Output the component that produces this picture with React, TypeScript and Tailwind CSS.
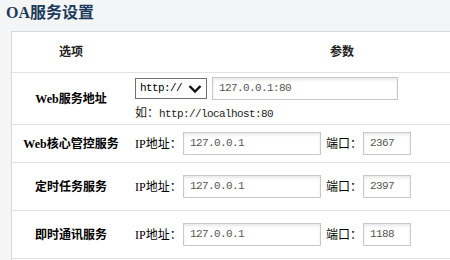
const mono = { fontFamily: '"Liberation Mono", "Noto Sans CJK SC", monospace' };
const serif = { fontFamily: '"Liberation Serif", "Noto Sans CJK SC", serif' };

function Field({ value, width }: { value: string; width: string }) {
  return (
    <div
      className={`${width} h-[23px] border border-[#c8c8c8] bg-white shadow-[inset_0_2px_3px_rgba(0,0,0,0.09)] pl-[6px] flex items-center text-[11px] tracking-[-0.6px] text-[#555]`}
      style={mono}
    >
      {value}
    </div>
  );
}

function ServiceRow({ label, ip, port, height }: { label: string; ip: string; port: string; height: string }) {
  return (
    <div className={`flex ${height} border-t border-[#e2e2e2]`}>
      <div className="w-[118px] flex items-center justify-center text-[12px] font-bold text-black" style={serif}>{label}</div>
      <div className="flex-1 flex items-center pl-[5px] text-[12px] text-black" style={serif}>
        <span className="w-[48px]">IP地址：</span>
        <Field value={ip} width="w-[138px]" />
        <span className="w-[37px] ml-[5px]">端口：</span>
        <Field value={port} width="w-[48px]" />
      </div>
    </div>
  );
}

export default function App() {
  return (
    <div
      className="w-[450px] h-[260px] overflow-hidden bg-[#f4f5f7]"
      style={{ fontFamily: '"Liberation Sans", "Noto Sans CJK SC", sans-serif' }}
    >
      <div className="h-[31px] pl-[6px] pt-[1px] text-[16px] font-bold text-[#1c3a5a] leading-[24px]" style={serif}>OA服务设置</div>

      <div className="ml-[11px] w-[544px] border border-[#d9d9d9] bg-white">
        {/* header */}
        <div className="flex h-[40px] text-[12px] font-bold text-[#222]">
          <div className="w-[118px] flex items-center justify-center">选项</div>
          <div className="flex-1 flex items-center justify-center">参数</div>
        </div>

        {/* web address */}
        <div className="flex h-[52px] border-t border-[#e2e2e2]">
          <div className="w-[118px] flex items-center justify-center text-[12px] font-bold text-black" style={serif}>Web服务地址</div>
          <div className="flex-1 pl-[5px] pt-[4px]">
            <div className="flex items-center gap-[5px]">
              <div className="w-[72px] h-[21px] border border-[#707070] flex items-center justify-between pl-[4px] pr-[4px] text-[11px] tracking-[-0.6px] text-black" style={mono}>
                <span>http://</span>
                <svg width="14" height="10" viewBox="0 0 14 10">
                  <path d="M1.5 2 L7 7.5 L12.5 2" fill="none" stroke="#111" strokeWidth="2.4" />
                </svg>
              </div>
              <Field value="127.0.0.1:80" width="w-[186px]" />
            </div>
            <div className="mt-[4px] text-[11px] tracking-[-0.6px] text-[#222] leading-[16px]" style={mono}>
              <span className="tracking-normal text-[12px]" style={{ fontFamily: '"Noto Sans CJK SC", sans-serif' }}>如：</span>http://localhost:80
            </div>
          </div>
        </div>

        <ServiceRow label="Web核心管控服务" ip="127.0.0.1" port="2367" height="h-[38px]" />
        <ServiceRow label="定时任务服务" ip="127.0.0.1" port="2397" height="h-[48px]" />
        <ServiceRow label="即时通讯服务" ip="127.0.0.1" port="1188" height="h-[48px]" />
        <div className="h-[20px] border-t border-[#e2e2e2]" />
      </div>
    </div>
  );
}
